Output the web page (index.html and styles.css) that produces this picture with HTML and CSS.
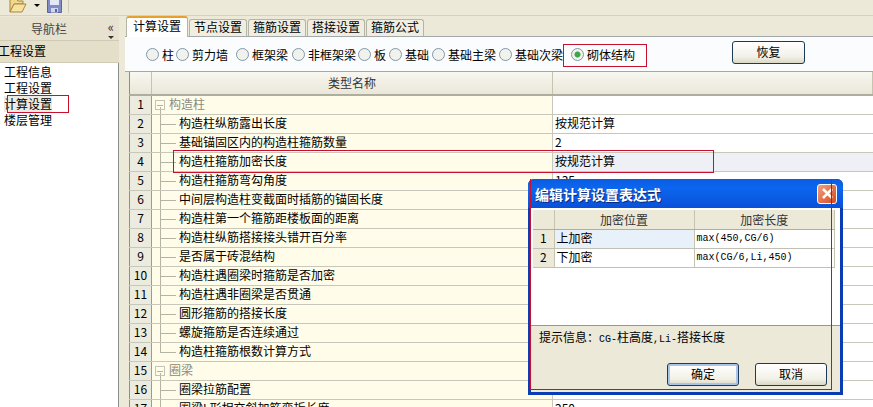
FILE: index.html
```html
<!DOCTYPE html>
<html lang="zh-CN">
<head>
    <meta charset="UTF-8">
    <title>计算设置</title>
    <link rel="stylesheet" href="styles.css">
</head>

<body>

<div class="app-container">
    <div class="toolbar">
        <svg class="tool-icon open-icon" width="18" height="15" viewBox="0 0 18 15">
            <path d="M1 1 H7 L9 3 H14 V6 H5 L1 14 Z" fill="#f0d98a" stroke="#a8863c" stroke-width="1"/>
            <path d="M5 6 H17 L13 14 H1 Z" fill="#f7e3a0" stroke="#a8863c" stroke-width="1"/>
        </svg>
        <span class="tool-arrow"></span>
        <svg class="tool-icon" width="15" height="14" viewBox="0 0 15 14">
            <path d="M0.5 0 H14.5 V13.5 H0.5 Z" fill="#7f8cc8" stroke="#5a659f"/>
            <path d="M3 0 H12 V6 H3 Z" fill="#e4e8f6"/>
            <path d="M4 9 H11 V13.5 H4 Z" fill="#d2d6ea"/>
            <path d="M8 10 H10 V13 H8 Z" fill="#5a659f"/>
        </svg>
        <span class="tool-sep"></span>
    </div>

    <div class="nav">
        <div class="nav-head">
            <span>导航栏</span>
            <span class="nav-collapse">«<i class="nav-down"></i></span>
        </div>
        <div class="nav-section">工程设置</div>
        <ul class="nav-list">
            <li>工程信息</li>
            <li>工程设置</li>
            <li class="current">计算设置</li>
            <li>楼层管理</li>
        </ul>
    </div>

    <div class="main">
        <div class="tabs">
            <div class="tab active">计算设置</div>
            <div class="tab">节点设置</div>
            <div class="tab">箍筋设置</div>
            <div class="tab">搭接设置</div>
            <div class="tab">箍筋公式</div>
        </div>
        <div class="radio-bar">
            <label class="radio"><i></i>柱</label>
            <label class="radio"><i></i>剪力墙</label>
            <label class="radio"><i></i>框架梁</label>
            <label class="radio"><i></i>非框架梁</label>
            <label class="radio"><i></i>板</label>
            <label class="radio"><i></i>基础</label>
            <label class="radio"><i></i>基础主梁</label>
            <label class="radio"><i></i>基础次梁</label>
            <label class="radio checked"><i></i>砌体结构</label>
            <button class="btn restore">恢复</button>
        </div>
        <div class="grid-wrap">
            <table class="settings-table">
                <colgroup><col class="c-num"><col class="c-name"><col></colgroup>
                <thead>
                    <tr><th></th><th>类型名称</th><th></th></tr>
                </thead>
                <tbody>
                    <tr class="group"><td class="num">1</td><td class="name"><i class="fold"></i>构造柱</td><td></td></tr>
                    <tr><td class="num">2</td><td class="name">构造柱纵筋露出长度</td><td>按规范计算</td></tr>
                    <tr><td class="num">3</td><td class="name">基础锚固区内的构造柱箍筋数量</td><td>2</td></tr>
                    <tr class="selected"><td class="num">4</td><td class="name">构造柱箍筋加密长度</td><td>按规范计算</td></tr>
                    <tr><td class="num">5</td><td class="name">构造柱箍筋弯勾角度</td><td>135</td></tr>
                    <tr><td class="num">6</td><td class="name">中间层构造柱变截面时插筋的锚固长度</td><td></td></tr>
                    <tr><td class="num">7</td><td class="name">构造柱第一个箍筋距楼板面的距离</td><td></td></tr>
                    <tr><td class="num">8</td><td class="name">构造柱纵筋搭接接头错开百分率</td><td></td></tr>
                    <tr><td class="num">9</td><td class="name">是否属于砖混结构</td><td></td></tr>
                    <tr><td class="num">10</td><td class="name">构造柱遇圈梁时箍筋是否加密</td><td></td></tr>
                    <tr><td class="num">11</td><td class="name">构造柱遇非圈梁是否贯通</td><td></td></tr>
                    <tr><td class="num">12</td><td class="name">圆形箍筋的搭接长度</td><td></td></tr>
                    <tr><td class="num">13</td><td class="name">螺旋箍筋是否连续通过</td><td></td></tr>
                    <tr class="last"><td class="num">14</td><td class="name">构造柱箍筋根数计算方式</td><td></td></tr>
                    <tr class="group"><td class="num">15</td><td class="name"><i class="fold"></i>圈梁</td><td></td></tr>
                    <tr><td class="num">16</td><td class="name">圈梁拉筋配置</td><td></td></tr>
                    <tr><td class="num">17</td><td class="name">圈梁L形相交斜加筋弯折长度</td><td>250</td></tr>
                </tbody>
            </table>
        </div>
    </div>

    <!-- red marks drawn over the screenshot -->
    <div class="mark mark-nav"></div>
    <div class="mark mark-radio"></div>
    <div class="mark mark-row"></div>

    <div class="dialog">
        <div class="dialog-title">
            <span>编辑计算设置表达式</span>
            <span class="close-btn">
                <svg width="13" height="13" viewBox="0 0 13 13"><path d="M2 2 L11 11 M11 2 L2 11" stroke="#fff" stroke-width="2.5"/></svg>
            </span>
        </div>
        <div class="dialog-body">
            <table class="dense-table">
                <colgroup><col class="d-num"><col class="d-pos"><col></colgroup>
                <thead>
                    <tr><th></th><th>加密位置</th><th>加密长度</th></tr>
                </thead>
                <tbody>
                    <tr class="active-row"><td class="num">1</td><td class="pos">上加密</td><td class="expr">max(450,CG/6)</td></tr>
                    <tr><td class="num">2</td><td class="pos">下加密</td><td class="expr">max(CG/6,Li,450)</td></tr>
                </tbody>
            </table>
        </div>
        <div class="dialog-foot">
            <div class="hint">提示信息：<span class="mono">CG-</span>柱高度<span class="mono">,Li-</span>搭接长度</div>
            <div class="dialog-buttons">
                <button class="btn default">确定</button>
                <button class="btn">取消</button>
            </div>
        </div>
        <div class="mark mark-dialog"></div>
    </div>
</div>

</body>
</html>
```

FILE: styles.css
```css
* {
    box-sizing: border-box;
}

html, body {
    margin: 0;
    height: 100%;
    overflow: hidden;
}

body {
    color: #000000;
    background: #ece9d8;
    font-family: "Noto Sans CJK SC", "Liberation Sans", sans-serif;
    font-size: 12px;
    line-height: 16px;
}

.app-container {
    position: relative;
    display: grid;
    width: 873px;
    height: 407px;
    overflow: hidden;
    grid-template-rows: 16px 1fr;
    grid-template-columns: 119px 1fr;
    grid-template-areas:
        "tb tb"
        "nav main";
}

/* toolbar */
.toolbar {
    grid-area: tb;
    display: flex;
    align-items: flex-end;
    padding-left: 9px;
    padding-bottom: 2px;
    background: #ece9d8;
    border-bottom: 1px solid #d6d2bc;
    overflow: hidden;
}
.tool-icon {
    flex: none;
    display: block;
}
.tool-arrow {
    width: 0;
    height: 0;
    margin: 0 7px 6px 7px;
    border-left: 3px solid transparent;
    border-right: 3px solid transparent;
    border-top: 3px solid #000000;
}
.tool-sep {
    width: 1px;
    height: 14px;
    margin-left: 6px;
    background: #cfcbb6;
}

/* left navigation */
.nav {
    grid-area: nav;
    display: flex;
    flex-direction: column;
    padding-top: 1px;
}
.nav-head {
    display: flex;
    justify-content: space-between;
    height: 24px;
    padding: 4px 5px 0 31px;
    color: #444444;
    background: #e6e2cf;
    border-bottom: 1px solid #cfcbb6;
}
.nav-collapse {
    display: flex;
    flex-direction: column;
    align-items: center;
    gap: 3px;
    font-size: 13px;
    line-height: 12px;
    color: #333333;
}
.nav-down {
    width: 0;
    height: 0;
    border-left: 3px solid transparent;
    border-right: 3px solid transparent;
    border-top: 3px solid #333333;
}
.nav-section {
    height: 22px;
    margin-left: -2px;
    padding: 2px 0 0 0;
    background: #e4dfc8;
    border-bottom: 1px solid #cfcbb6;
}
.nav-list {
    flex: 1;
    margin: 0;
    padding: 1px 0 0 4px;
    list-style: none;
    background: #ffffff;
    border-right: 1px solid #8a8f8f;
}
.nav-list li {
    height: 16px;
}
.nav-list .current {
    width: 48px;
    background: #ecebe2;
}

/* right side */
.main {
    grid-area: main;
    display: flex;
    flex-direction: column;
    min-width: 0;
    padding-left: 6px;
}
.tabs {
    display: flex;
    align-items: flex-end;
    gap: 1px;
    height: 21px;
    padding-left: 1px;
    border-bottom: 1px solid #a3a8a8;
}
.tab {
    width: 58px;
    height: 17px;
    line-height: 14px;
    text-align: center;
    background: #f0eee2;
    border: 1px solid #b5b5a5;
    border-bottom: 0;
    border-radius: 3px 3px 0 0;
}
.tab.active {
    width: 62px;
    height: 21px;
    margin-bottom: -1px;
    padding-top: 1px;
    background: #ffffff;
    border-top: 2px solid #e8a02c;
}
.radio-bar {
    display: grid;
    grid-template-columns: 30px 60px 56px 66px 31px 43px 67px 72px 161px 73px;
    align-items: center;
    height: 34px;
    padding-left: 21px;
    padding-top: 1px;
    background: #fbfcfe;
}
.radio {
    display: flex;
    align-items: center;
    gap: 3px;
    white-space: nowrap;
}
.radio i {
    flex: none;
    width: 13px;
    height: 13px;
    border: 1px solid #7f98ad;
    border-radius: 50%;
    background: #f2f2ec;
}
.radio.checked i {
    background: radial-gradient(circle, #3fa34a 0 2.5px, #f2f2ec 3.5px);
}
.btn {
    width: 72px;
    height: 23px;
    padding: 0 0 2px 0;
    font: inherit;
    color: #000000;
    background: linear-gradient(#ffffff, #f2f1e8 70%, #dcd8c6);
    border: 1px solid #1d3a56;
    border-radius: 3px;
}
.restore {
    width: 73px;
    margin-top: -4px;
}
.grid-wrap {
    flex: 1;
    padding-left: 4px;
    min-height: 0;
    overflow: hidden;
    border-top: 1px solid #a3a8a8;
}

/* main table */
.settings-table {
    width: 100%;
    table-layout: fixed;
    border-collapse: collapse;
    background: #ffffff;
    border-left: 1px solid #8a8f8f;
}
.c-num {
    width: 22px;
}
.c-name {
    width: 401px;
}
.settings-table th {
    height: 23px;
    padding: 0;
    font-weight: normal;
    background: linear-gradient(#f8f7f0, #eae7d9);
    border-right: 1px solid #c6c3b1;
    border-bottom: 2px solid #aeae9e;
    color: #333333;
}
.settings-table td {
    height: 19px;
    padding: 0 0 2px 2px;
    white-space: nowrap;
    border-bottom: 1px solid #c8c8ba;
}
.settings-table .num {
    padding: 0 0 2px 0;
    text-align: center;
    background: #ecebdf;
    border-right: 1px solid #9c9c8c;
}
.settings-table .name {
    padding-left: 27px;
    background-color: #fffde9;
    background-image:
        linear-gradient(#b4b4a4, #b4b4a4),
        linear-gradient(#b4b4a4, #b4b4a4);
    background-repeat: no-repeat;
    background-size: 1px 100%, 16px 1px;
    background-position: 8px 0, 8px 9px;
    border-right: 1px solid #c8c8ba;
}
.settings-table .last .name {
    background-size: 1px 10px, 16px 1px;
}
.settings-table .group .name {
    padding-left: 3px;
    color: #8a8a80;
    background-size: 1px 8px, 0 0;
    background-position: 8px 11px, 0 0;
}
.fold {
    display: inline-block;
    width: 10px;
    height: 10px;
    margin-right: 4px;
    vertical-align: -1px;
    border: 1px solid #c4c4b4;
    background: linear-gradient(#b4b4a4, #b4b4a4) center / 6px 1px no-repeat;
}
.settings-table .selected td:last-child {
    background: #eef0f6;
}

/* dialog */
.dialog {
    position: absolute;
    left: 528px;
    top: 179px;
    width: 315px;
    height: 216px;
    display: flex;
    flex-direction: column;
    padding: 0 3px 3px 3px;
    background: #0a3db4;
    border-radius: 6px 6px 0 0;
}
.dialog-title {
    display: flex;
    justify-content: space-between;
    align-items: center;
    flex: none;
    height: 29px;
    margin: 0 -3px;
    padding: 0 6px 0 7px;
    font-size: 14px;
    font-weight: bold;
    color: #ffffff;
    text-shadow: 1px 1px 0 #0a2a80;
    background: linear-gradient(#0a5ce0, #0c66ee 30%, #0a50d8);
    border-radius: 6px 6px 0 0;
}
.close-btn {
    display: flex;
    align-items: center;
    justify-content: center;
    width: 20px;
    height: 20px;
    background: linear-gradient(135deg, #f0a080, #d84a20);
    border: 1px solid #ffffff;
    border-radius: 3px;
}
.dialog-body {
    height: 117px;
    flex: none;
    padding: 2px 5px 0 2px;
    background: #ffffff;
}
.dense-table {
    width: 100%;
    table-layout: fixed;
    border-collapse: collapse;
}
.d-num {
    width: 21px;
}
.d-pos {
    width: 140px;
}
.dense-table th {
    height: 19px;
    padding: 1px 0 0 0;
    font-weight: normal;
    color: #333333;
    background: #ece9d8;
    border-right: 1px solid #c6c3b1;
    border-bottom: 1px solid #aeae9e;
}
.dense-table td {
    height: 19px;
    padding: 0 0 2px 2px;
    border-right: 1px solid #c6c3b1;
    border-bottom: 1px solid #c0c0b4;
}
.dense-table .num {
    padding: 0 0 2px 0;
    text-align: center;
    background: #ece9d8;
}
.active-row .pos {
    background: #e8f0fa;
}
.dense-table .expr {
    padding: 0 0 0 2px;
    font-family: "Liberation Mono", monospace;
    font-size: 10px;
}
.dialog-foot {
    flex: 1;
    display: flex;
    flex-direction: column;
    padding: 3px 13px 6px 8px;
    background: #ece9d8;
    border-top: 1px solid #8c9a9a;
}
.hint {
    flex: 1;
}
.mono {
    font-family: "Liberation Mono", monospace;
    font-size: 10px;
}
.dialog-buttons {
    display: flex;
    justify-content: flex-end;
    gap: 16px;
}
.btn.default {
    border-color: #1d3a56;
    box-shadow: inset 0 0 0 2px #a8c4ea;
}

/* red marks */
.mark {
    position: absolute;
    border: 1px solid #c8102e;
    pointer-events: none;
}
.mark-nav {
    left: 7px;
    top: 95px;
    width: 62px;
    height: 18px;
}
.mark-radio {
    left: 563px;
    top: 44px;
    width: 84px;
    height: 23px;
}
.mark-row {
    left: 173px;
    top: 150px;
    width: 541px;
    height: 23px;
}
.mark-dialog {
    left: 2px;
    top: 0;
    width: 302px;
    height: 211px;
    border-top: 0;
}
```
